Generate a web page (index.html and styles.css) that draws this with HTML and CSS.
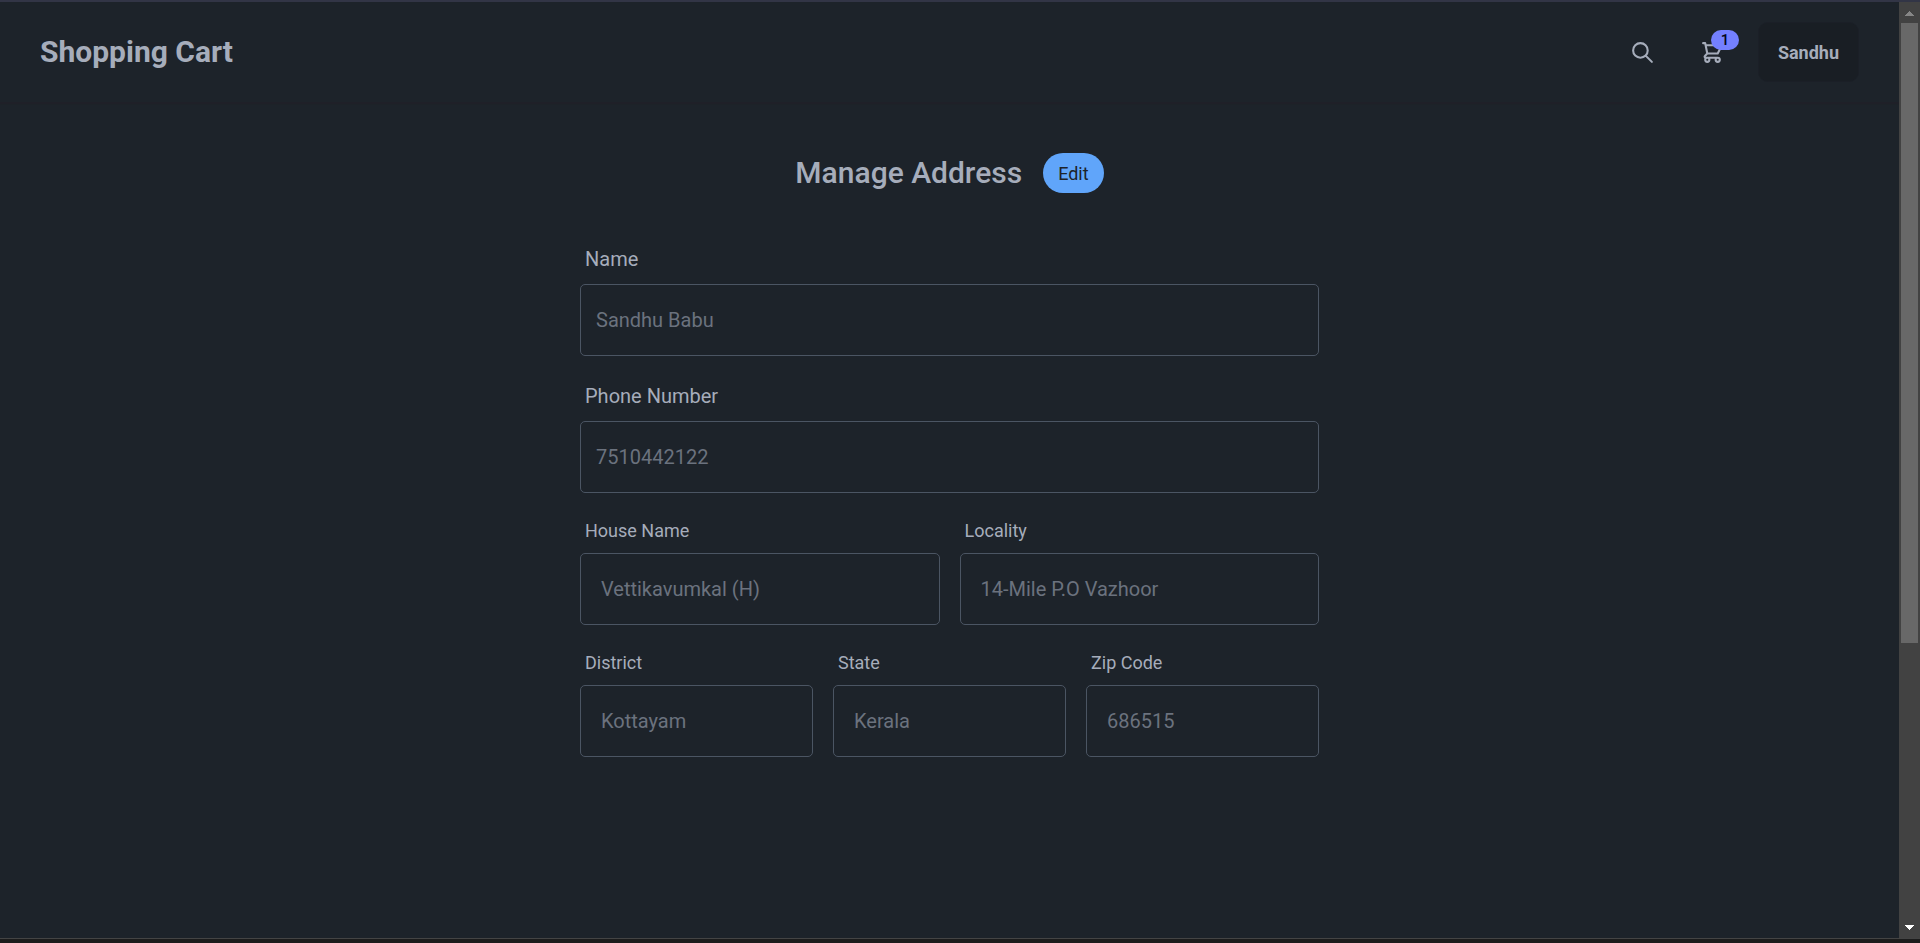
FILE: index.html
```html
<!DOCTYPE html>
<html lang="en">
<head>
<meta charset="utf-8">
<meta name="viewport" content="width=device-width, initial-scale=1">
<title>Shopping Cart</title>
<link rel="stylesheet" href="styles.css">
</head>
<body>
<div class="window">
  <div class="page">
    <header class="navbar">
      <a class="brand" href="#">Shopping Cart</a>
      <nav class="actions">
        <button class="icon-button" type="button" aria-label="Search">
          <svg class="icon" viewBox="0 0 24 24"><path d="M21 21l-6-6m2-5a7 7 0 11-14 0 7 7 0 0114 0z"/></svg>
        </button>
        <button class="icon-button" type="button" aria-label="Cart">
          <svg class="icon" viewBox="0 0 24 24"><path d="M3 3h2l.4 2M7 13h10l4-8H5.4M7 13L5.4 5M7 13l-2.293 2.293c-.63.63-.184 1.707.707 1.707H17m0 0a2 2 0 100 4 2 2 0 000-4zm-8 2a2 2 0 11-4 0 2 2 0 014 0z"/></svg>
          <span class="badge">1</span>
        </button>
        <button class="user-button" type="button">Sandhu</button>
      </nav>
    </header>
    <main class="content">
      <div class="heading">
        <h1 class="title">Manage Address</h1>
        <button class="edit-button" type="button">Edit</button>
      </div>
      <form class="form">
        <div class="field">
          <label class="label label-large" for="name">Name</label>
          <input class="input" id="name" type="text" placeholder="Sandhu Babu" disabled>
        </div>
        <div class="field">
          <label class="label label-large" for="phone">Phone Number</label>
          <input class="input" id="phone" type="text" placeholder="7510442122" disabled>
        </div>
        <div class="row">
          <div class="field">
            <label class="label" for="house">House Name</label>
            <input class="input input-inset" id="house" type="text" placeholder="Vettikavumkal (H)" disabled>
          </div>
          <div class="field">
            <label class="label" for="locality">Locality</label>
            <input class="input input-inset" id="locality" type="text" placeholder="14-Mile P.O Vazhoor" disabled>
          </div>
        </div>
        <div class="row">
          <div class="field">
            <label class="label" for="district">District</label>
            <input class="input input-inset" id="district" type="text" placeholder="Kottayam" disabled>
          </div>
          <div class="field">
            <label class="label" for="state">State</label>
            <input class="input input-inset" id="state" type="text" placeholder="Kerala" disabled>
          </div>
          <div class="field">
            <label class="label" for="zip">Zip Code</label>
            <input class="input input-inset" id="zip" type="text" placeholder="686515" disabled>
          </div>
        </div>
      </form>
    </main>
  </div>
  <div class="scrollbar" aria-hidden="true">
    <svg class="arrow arrow-up" viewBox="0 0 21 21"><path d="M6 14h9v-1h-1v-1h-1v-1h-1v-1h-1v-1h-1v1h-1v1h-1v1h-1v1h-1z"/></svg>
    <div class="track"><div class="thumb"></div></div>
    <svg class="arrow arrow-down" viewBox="0 0 21 21"><path d="M6 8h9v1h-1v1h-1v1h-1v1h-1v1h-1v-1h-1v-1h-1v-1h-1v-1h-1z"/></svg>
  </div>
</div>
</body>
</html>
```
FILE: styles.css
```css
* {
  box-sizing: border-box;
}

body {
  display: flex;
  flex-direction: column;
  height: 100vh;
  margin: 0;
  border-top: 2px solid #323546;
  border-bottom: 4px solid #1c1c1c;
  background: #1d232a;
  color: #a6adbb;
  font-family: Roboto, sans-serif;
}

button,
input {
  margin: 0;
  font-family: inherit;
}

.window {
  display: flex;
  flex: 1;
  min-height: 0;
  border-bottom: 1px solid #444444;
}

.page {
  flex: 1;
  overflow: hidden;
}

.navbar {
  display: flex;
  align-items: center;
  justify-content: space-between;
  padding: 20px 40px;
  border-bottom: 1px solid #1f2028;
  box-shadow: 0 1px 1px #1f2028;
}

.brand {
  color: inherit;
  font-size: 30px;
  font-weight: 700;
  line-height: 40px;
  text-decoration: none;
}

.actions {
  display: flex;
  align-items: center;
  gap: 10px;
}

.icon-button {
  position: relative;
  display: flex;
  align-items: center;
  justify-content: center;
  width: 60px;
  height: 60px;
  padding: 0;
  border: 0;
  border-radius: 50%;
  background: transparent;
  color: inherit;
}

.icon {
  width: 25px;
  height: 25px;
  fill: none;
  stroke: currentColor;
  stroke-width: 2;
  stroke-linecap: round;
  stroke-linejoin: round;
}

.badge {
  position: absolute;
  top: 8px;
  right: 4px;
  width: 28px;
  border-radius: 10px;
  background: #7480ff;
  color: #050617;
  font-size: 15px;
  font-weight: 500;
  line-height: 20px;
  text-align: center;
}

.user-button {
  height: 60px;
  margin-left: 5px;
  padding: 0 19px;
  border: 1px solid #1b1f27;
  border-radius: 10px;
  background: #191e24;
  color: inherit;
  font-size: 18px;
  font-weight: 700;
}

.content {
  padding: 50px 20px;
}

.heading {
  display: flex;
  align-items: center;
  justify-content: center;
  gap: 21px;
  margin-bottom: 51px;
}

.title {
  margin: 0;
  font-size: 30px;
  font-weight: 500;
  line-height: 40px;
}

.edit-button {
  height: 40px;
  padding: 0 15px;
  border: 0;
  border-radius: 20px;
  background: #60a5fa;
  color: #1d232a;
  font-size: 18px;
}

.form {
  display: flex;
  flex-direction: column;
  gap: 25px;
  max-width: 739px;
  margin: 0 auto;
}

.row {
  display: flex;
  gap: 20px;
}

.field {
  display: flex;
  flex: 1;
  flex-direction: column;
  gap: 10px;
  min-width: 0;
}

.label {
  padding-left: 5px;
  font-size: 18px;
  line-height: 25px;
}

.label-large {
  font-size: 20px;
  line-height: 30px;
}

.input {
  width: 100%;
  height: 72px;
  padding: 0 15px;
  border: 1px solid #4b5563;
  border-radius: 5px;
  background: transparent;
  font-size: 20px;
}

.input-inset {
  padding: 0 20px;
}

.input::placeholder {
  color: #6b727e;
  opacity: 1;
}

.scrollbar {
  display: flex;
  flex-direction: column;
  width: 21px;
  background: #424242;
}

.arrow {
  width: 21px;
  height: 21px;
}

.arrow-up {
  fill: #868686;
}

.arrow-down {
  fill: #ffffff;
}

.track {
  flex: 1;
  padding: 0 2px;
}

.thumb {
  height: 69.3%;
  background: #686868;
}
```
